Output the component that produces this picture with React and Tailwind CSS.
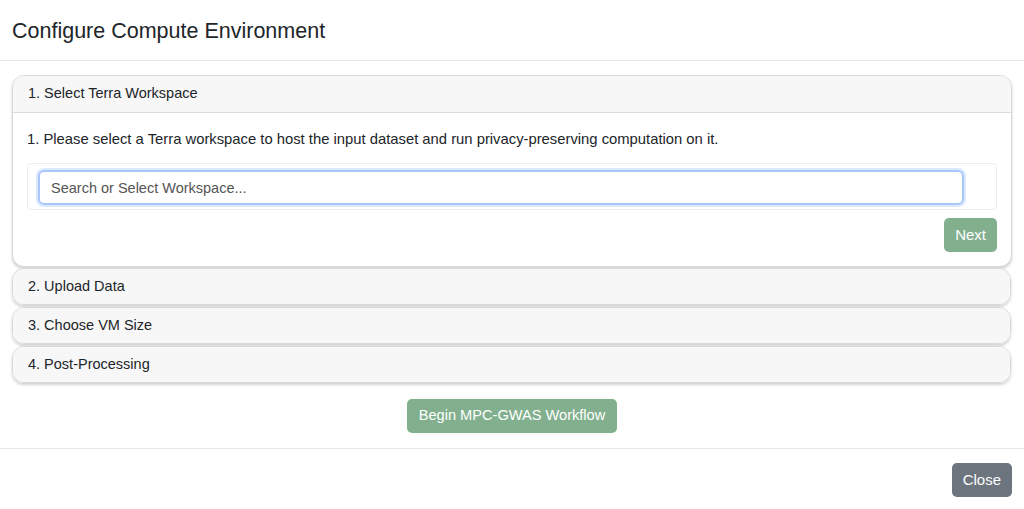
import { useState } from 'react'

const STEPS = ['2. Upload Data', '3. Choose VM Size', '4. Post-Processing']

function StepHeader({ label, open }) {
  return (
    <div className={`flex items-center px-[15px] bg-[#f7f7f7] text-[14.5px] text-[#212529] ${open ? 'h-[37px] border-b border-[#dcdcdc]' : 'h-[35px]'}`}>
      {label}
    </div>
  )
}

export default function App() {
  const [query, setQuery] = useState('')

  return (
    <div className="h-[509px] w-[1024px] bg-white font-['Liberation_Sans',Arial,sans-serif] text-[#212529] flex flex-col">
      <div className="h-[61px] shrink-0 flex items-center px-3 pt-[2px] border-b border-[#e6e6e6]">
        <h5 className="text-[21.5px] leading-tight">Configure Compute Environment</h5>
      </div>

      <div className="px-3 pt-[14px] pb-[15px] flex flex-col">
        <div className="rounded-xl border border-[#d9d9d9] shadow-[0_2px_3px_rgba(0,0,0,0.18)] overflow-hidden bg-white">
          <StepHeader label="1. Select Terra Workspace" open />
          <div className="px-[14px] pt-[16px] pb-[14px]">
            <p className="text-[14.8px] leading-[20px]">
              1. Please select a Terra workspace to host the input dataset and run privacy-preserving computation on it.
            </p>
            <div className="mt-[14px] border border-[#ececec] rounded-[4px] pl-[10px] pr-[32px] pt-[6px] pb-[4px]">
              <input
                value={query}
                onChange={e => setQuery(e.target.value)}
                placeholder="Search or Select Workspace..."
                className="w-full h-[35px] rounded-[6px] border-2 border-[#a9c6fb] shadow-[0_0_0_2px_rgba(13,110,253,0.15)] px-[11px] text-[14.5px] text-[#212529] placeholder:text-[#555] outline-none"
              />
            </div>
            <div className="flex justify-end mt-[8px]">
              <button className="h-[34px] px-[11px] rounded-[5px] bg-[#82b08f] text-white text-[15px]">Next</button>
            </div>
          </div>
        </div>

        {STEPS.map((s, i) => (
          <div key={s} className={`${i === 0 ? 'mt-[1px]' : 'mt-[2px]'} mr-px rounded-xl border border-[#d9d9d9] shadow-[0_2px_3px_rgba(0,0,0,0.18)] overflow-hidden`}>
            <StepHeader label={s} />
          </div>
        ))}

        <div className="flex justify-center mt-[16px]">
          <button className="h-[34px] px-[12px] rounded-[5px] bg-[#82b08f] text-white text-[14.6px]">Begin MPC-GWAS Workflow</button>
        </div>
      </div>

      <div className="border-t border-[#e6e6e6] flex justify-end px-3 pt-[14px]">
        <button className="h-[34px] px-[11px] rounded-[5px] bg-[#6c757d] text-white text-[15px]">Close</button>
      </div>
    </div>
  )
}
